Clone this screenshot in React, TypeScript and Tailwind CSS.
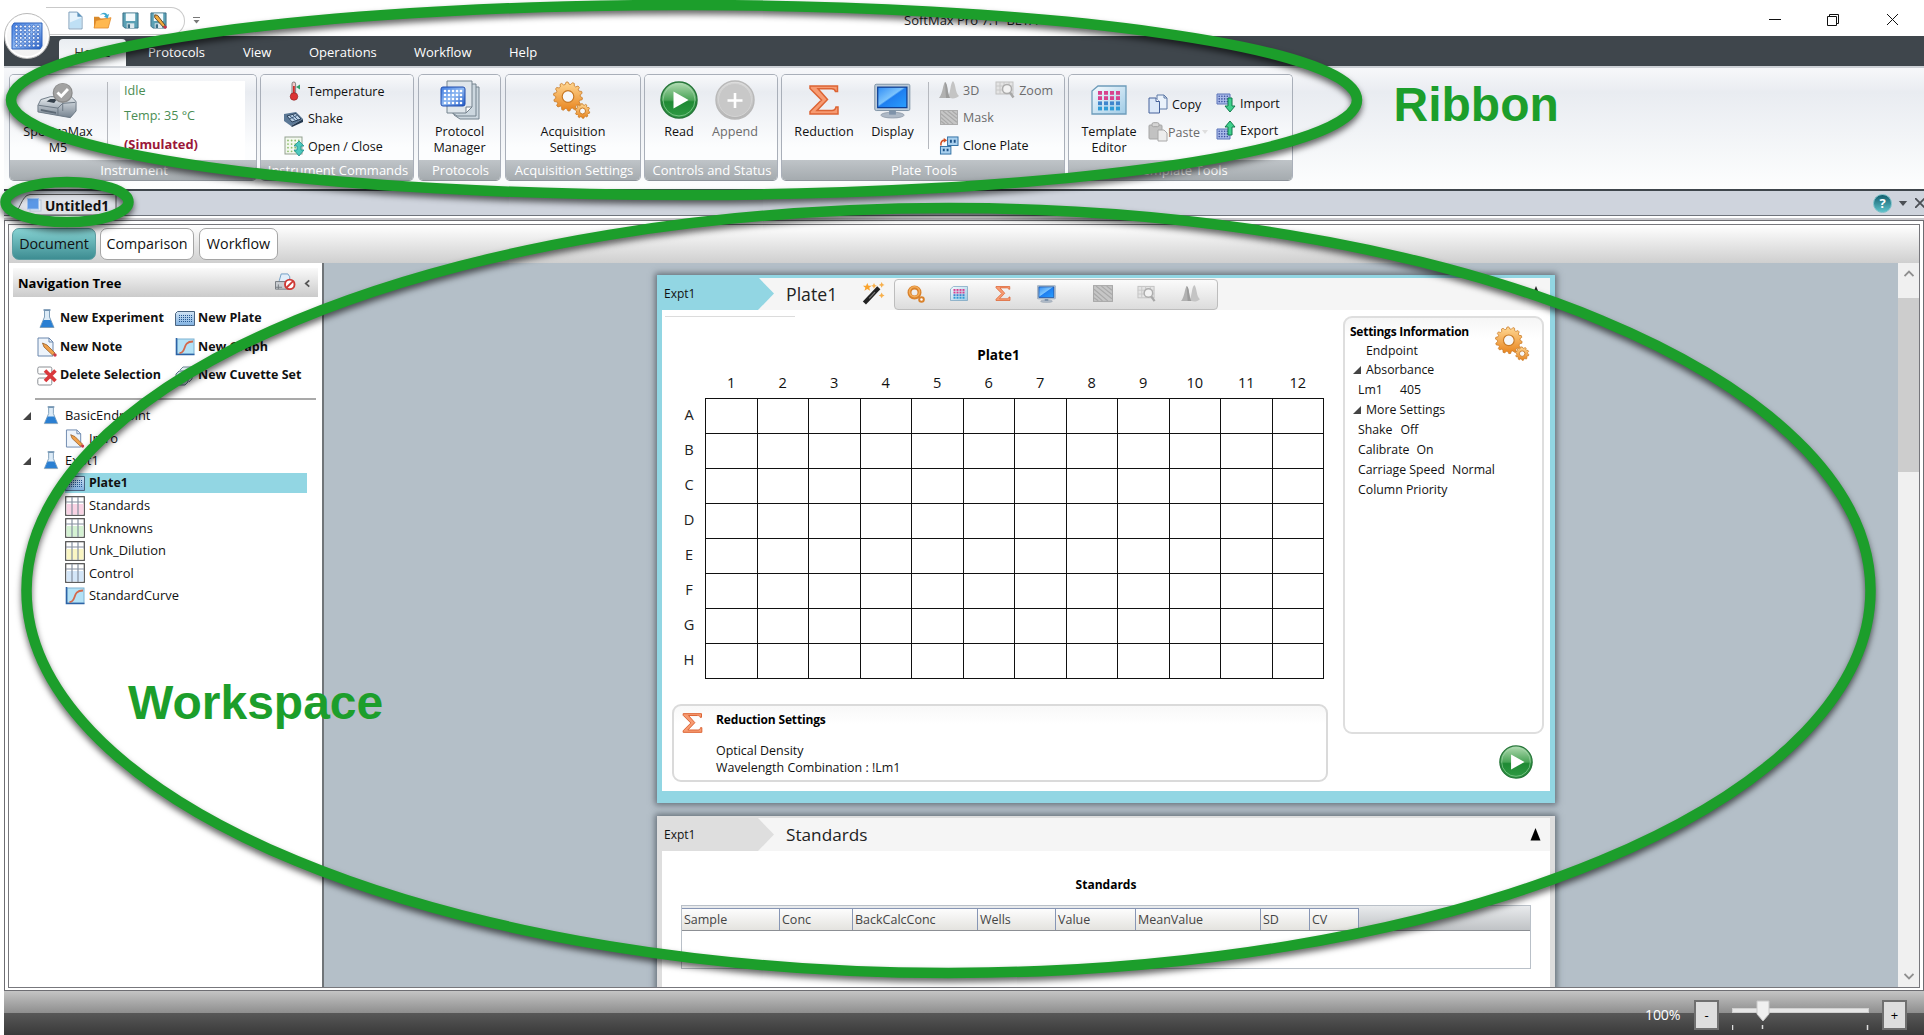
import React from "react";

type P = { className?: string };

/* ---------- icons ---------- */

const Defs = () => (
  <svg className="absolute w-0 h-0" aria-hidden="true">
    <defs>
      <linearGradient id="gPlate" x1="0" y1="0" x2="1" y2="1">
        <stop offset="0" stopColor="#3f7be0" />
        <stop offset="0.5" stopColor="#8fb9f2" />
        <stop offset="1" stopColor="#1c56c4" />
      </linearGradient>
      <linearGradient id="gTray" x1="0" y1="0" x2="0" y2="1">
        <stop offset="0" stopColor="#d3e5f5" />
        <stop offset="1" stopColor="#7fb0e0" />
      </linearGradient>
      <linearGradient id="gOrange" x1="0" y1="0" x2="0" y2="1">
        <stop offset="0" stopColor="#ffd894" />
        <stop offset="1" stopColor="#e8831c" />
      </linearGradient>
      <linearGradient id="gGreen" x1="0" y1="0" x2="0" y2="1">
        <stop offset="0" stopColor="#b4dcb4" />
        <stop offset="0.5" stopColor="#4aa457" />
        <stop offset="0.55" stopColor="#1f8a34" />
        <stop offset="1" stopColor="#2f9b44" />
      </linearGradient>
      <linearGradient id="gGray" x1="0" y1="0" x2="0" y2="1">
        <stop offset="0" stopColor="#dedede" />
        <stop offset="1" stopColor="#b4b4b4" />
      </linearGradient>
      <linearGradient id="gScreen" x1="0" y1="0" x2="1" y2="1">
        <stop offset="0" stopColor="#2f8cf5" />
        <stop offset="0.45" stopColor="#7cc4fd" />
        <stop offset="0.5" stopColor="#1f7ff0" />
        <stop offset="1" stopColor="#2aa0ff" />
      </linearGradient>
      <linearGradient id="gMetal" x1="0" y1="0" x2="0" y2="1">
        <stop offset="0" stopColor="#e6ebef" />
        <stop offset="1" stopColor="#75828f" />
      </linearGradient>
      <linearGradient id="gTpl" x1="0" y1="0" x2="1" y2="1">
        <stop offset="0" stopColor="#f6fbfe" />
        <stop offset="1" stopColor="#9fcbe6" />
      </linearGradient>
    </defs>
  </svg>
);

const Dots = ({ x, y, cols, rows, step, r, fill }: { x: number; y: number; cols: number; rows: number; step: number; r: number; fill: string }) => (
  <g fill={fill}>
    {Array.from({ length: cols * rows }, (_, i) => (
      <circle key={i} cx={x + (i % cols) * step} cy={y + Math.floor(i / cols) * step} r={r} />
    ))}
  </g>
);

const AppLogo = ({ className }: P) => (
  <svg viewBox="0 0 32 28" className={className}>
    <path d="M3 1H31V24L29 27H1V4Z" fill="url(#gPlate)" stroke="#2f62bd" />
    <g fill="#f2f7fe" stroke="#2a5cb8" strokeWidth="0.7">
      {Array.from({ length: 36 }, (_, i) => (
        <circle key={i} cx={5.5 + (i % 6) * 4.3} cy={4.5 + Math.floor(i / 6) * 3.8} r="1.500" />
      ))}
    </g>
  </svg>
);

const FileIcon = ({ className }: P) => (
  <svg viewBox="0 0 16 20" className={className}>
    <path d="M1 1H10L15 6V19H1Z" fill="#e6f3fc" stroke="#7a9bb8" />
    <path d="M2 12L14 7V18H2Z" fill="#bfe0f5" />
    <path d="M10 1V6H15Z" fill="#5c93bd" />
  </svg>
);
const FolderIcon = ({ className }: P) => (
  <svg viewBox="0 0 20 18" className={className}>
    <path d="M1 5H6L8 7H16V17H1Z" fill="#d98a2b" />
    <path d="M3 9L19 6L16 17H1Z" fill="#ffb84f" stroke="#e0892a" strokeWidth="0.8" />
    <path d="M7 4C9 0 14 0 15 3L17 2L15.500 7L11.500 5L13 4C12 2 9 2 7 4Z" fill="#3fa9cf" />
  </svg>
);
const SaveIcon = ({ className, pencil }: P & { pencil?: boolean }) => (
  <svg viewBox="0 0 18 18" className={className}>
    <path d="M1 1H17V17H3L1 15Z" fill="#5aa0b4" stroke="#3a6f86" />
    <rect x="4" y="1.500" width="10" height="8" fill="#f4fafc" />
    <rect x="5" y="12" width="8" height="5" fill="#dde9ee" />
    <rect x="6" y="13" width="2.500" height="4" fill="#3a6f86" />
    {pencil && (
      <g>
        <path d="M5 3L8 3.500L16 14L14 16L5 6Z" fill="#f2a93c" stroke="#5d4526" strokeWidth="1" />
        <circle cx="16" cy="16" r="1.800" fill="#c6304a" />
      </g>
    )}
  </svg>
);
const SpectraIcon = ({ className }: P) => (
  <svg viewBox="0 0 42 38" className={className}>
    <path d="M1 24L4 18L14 15H36L41 20V30L35 37L1 31Z" fill="url(#gMetal)" stroke="#6b7884" />
    <path d="M1.500 24L22 27L27 22L40 21M22 27V34M27 22V30" stroke="#6a7682" fill="none" />
    <path d="M4 28L20 31V33L4 30Z" fill="#5c6874" />
    <path d="M10 20L14 17.500H21L18 21.500Z" fill="#35404b" />
    <circle cx="27" cy="11" r="10.500" fill="#8b8b8b" />
    <circle cx="27" cy="10.500" r="9.300" fill="#a2a2a2" />
    <path d="M21.500 10.500L25.500 14.500L32.500 7" stroke="#fff" strokeWidth="3" fill="none" />
  </svg>
);
const ThermoIcon = ({ className }: P) => (
  <svg viewBox="0 0 20 20" className={className}>
    <rect x="8" y="1" width="3.600" height="13" rx="1.800" fill="#f2c9c9" stroke="#555" strokeWidth="0.7" />
    <rect x="9" y="5" width="1.800" height="10" fill="#d22a2a" />
    <circle cx="10" cy="15.500" r="3.800" fill="#dc3434" stroke="#8c2020" strokeWidth="0.6" />
    <path d="M12 6L16 3.500V8.500Z" fill="#2f9e6a" />
  </svg>
);
const ShakeIcon = ({ className }: P) => (
  <svg viewBox="0 0 20 16" className={className}>
    <path d="M0 3L12 1L19 8L7 15L0 10Z" fill="#5b7896" />
    <path d="M3 5L12 2.500L17 8L8 11Z" fill="#b9cfe4" stroke="#2b415a" />
    <path d="M7 15L19 8V11L8 16Z" fill="#23384f" />
    <path d="M6 5L12 10M9 4L14 9M5 8L13 4.500" stroke="#3e5b7c" />
  </svg>
);
const DoorIcon = ({ className }: P) => (
  <svg viewBox="0 0 20 20" className={className}>
    <rect x="1" y="1" width="17" height="17" fill="#f3f8ef" stroke="#93a18f" />
    <Dots x={4} y={4.5} cols={4} rows={4} step={3.6} r={0.9} fill="#8fbf6c" />
    <path d="M15 5L20 10H17V14H20L15 20L10 14H13V10H10Z" fill="#4cc8bd" stroke="#1f8f8a" strokeWidth="0.8" />
  </svg>
);
const ProtocolIcon = ({ className }: P) => (
  <svg viewBox="0 0 40 40" className={className}>
    <g stroke="#75838e" fill="#ccd7df">
      <path d="M14 7H39V39H20L14 35Z" />
      <path d="M11 4H36V36H17L11 32Z" />
      <path d="M7 1H32V27L26 33H7Z" fill="#dfe6eb" />
      <path d="M26 33V27H32Z" fill="#fff" />
    </g>
    <rect x="1" y="7" width="24" height="19" rx="2" fill="url(#gPlate)" stroke="#234fae" />
    <Dots x={5} y={11} cols={5} rows={4} step={4} r={1.3} fill="#fff" />
  </svg>
);

const gearPath = (cx: number, cy: number, ro: number, ri: number, n: number) => {
  let d = "";
  for (let i = 0; i < n; i++) {
    const a = (i / n) * Math.PI * 2;
    const s = (Math.PI * 2) / n;
    const pts: [number, number][] = [
      [ri, a],
      [ro, a + s * 0.2],
      [ro, a + s * 0.5],
      [ri, a + s * 0.7],
    ];
    pts.forEach(([r, t], k) => {
      d += (i === 0 && k === 0 ? "M" : "L") + (cx + r * Math.cos(t)).toFixed(2) + " " + (cy + r * Math.sin(t)).toFixed(2);
    });
  }
  return d + "Z";
};
const Gears = ({ className }: P) => (
  <svg viewBox="0 0 38 38" className={className}>
    <path d={gearPath(15, 15.5, 14.5, 12.3, 14)} fill="url(#gOrange)" stroke="#c87a26" strokeWidth="0.8" />
    <circle cx="15" cy="15.500" r="5.800" fill="#f6f7f9" stroke="#c87a26" strokeWidth="1.200" />
    <path d={gearPath(29.5, 30, 7.3, 6, 10)} fill="url(#gOrange)" stroke="#c87a26" strokeWidth="0.8" />
    <circle cx="29.500" cy="30" r="3" fill="#f6f7f9" stroke="#c87a26" />
  </svg>
);
const SmallGears = ({ className }: P) => (
  <svg viewBox="0 0 18 18" className={className}>
    <circle cx="7.500" cy="7.500" r="5" fill="none" stroke="#d9822c" strokeWidth="4" />
    <circle cx="7.500" cy="6.800" r="5" fill="none" stroke="#f4ad58" strokeWidth="1.500" />
    <circle cx="14.500" cy="14.500" r="2.300" fill="#fff" stroke="#d9822c" strokeWidth="2" />
  </svg>
);
const PlayIcon = ({ className }: P) => (
  <svg viewBox="0 0 38 38" className={className}>
    <circle cx="19" cy="19" r="18" fill="url(#gGreen)" stroke="#27773a" strokeWidth="1.500" />
    <circle cx="19" cy="19" r="16" fill="none" stroke="#a9dab0" strokeOpacity="0.6" />
    <path d="M13.500 10.500L28.500 19L13.500 27.500Z" fill="#fff" />
  </svg>
);
const AppendIcon = ({ className }: P) => (
  <svg viewBox="0 0 40 40" className={className}>
    <circle cx="20" cy="20" r="19" fill="url(#gGray)" stroke="#b9b9b9" strokeWidth="1.500" />
    <circle cx="20" cy="20" r="16.500" fill="#c8c8c8" stroke="#d4d4d4" />
    <path d="M20 13V28M12.500 20.500H27.500" stroke="#fff" strokeWidth="2.600" />
  </svg>
);
const SigmaIcon = ({ className }: P) => (
  <svg viewBox="0 0 30 30" className={className}>
    <path
      d="M1 1H28.500V6.500H26.500C26 4.500 25 3.800 22.500 3.800H9L18.500 14.500L8 25.500H23C25.500 25.500 26.500 24.500 27 22H29V29H1V26.500L12.500 15L1 3.500Z"
      fill="#f79b72"
      stroke="#dc6434"
      strokeWidth="1.500"
    />
  </svg>
);
const MonitorIcon = ({ className }: P) => (
  <svg viewBox="0 0 38 36" className={className}>
    <ellipse cx="19" cy="32.500" rx="12" ry="3" fill="#aeb9c6" stroke="#8794a2" strokeWidth="0.7" />
    <rect x="15.500" y="26" width="7" height="6" fill="#7f93aa" />
    <rect x="0.800" y="0.800" width="36" height="27" rx="1.500" fill="#bccbd8" stroke="#7e93a6" />
    <rect x="3.800" y="3.800" width="30" height="21" fill="url(#gScreen)" stroke="#0e3f94" strokeWidth="1.300" />
  </svg>
);
const ThreeDIcon = ({ className }: P) => (
  <svg viewBox="0 0 20 18" className={className}>
    <path d="M0 17C4 12 4 3 6 1C9 3 8 12 11 17Z" fill="#b1b1b1" />
    <path d="M9 16C12 10 11 3 14 0C17 3 16 12 20 15C17 18 12 18 9 16Z" fill="#c4c4c4" />
    <path d="M6 1C9 3 8 12 11 17H7Z" fill="#9b9b9b" />
  </svg>
);
const ZoomIcon = ({ className }: P) => (
  <svg viewBox="0 0 20 18" className={className}>
    <rect x="1" y="1" width="17" height="12" fill="#e4e4e4" stroke="#c2c2c2" />
    <path d="M1 5H18M1 9H18M5 1V13M9 1V13M14 1V13" stroke="#c8c8c8" />
    <circle cx="12" cy="8" r="4.500" fill="#f2f2f2" stroke="#adadad" strokeWidth="1.500" />
    <path d="M15 11.500L18.500 16.500" stroke="#a8a8a8" strokeWidth="2.400" />
  </svg>
);
const MaskIcon = ({ className }: P) => (
  <svg viewBox="0 0 19 16" className={className}>
    <rect x="0.500" y="0.500" width="18" height="15" fill="#c6c6c6" stroke="#a9a9a9" />
    <path d="M1 4L14 15M1 8L9 15M1 12L5 15M3 1L18 13M8 1L18 9M13 1L18 5" stroke="#a9a9a9" strokeWidth="1.200" />
  </svg>
);
const CloneIcon = ({ className }: P) => (
  <svg viewBox="0 0 20 20" className={className}>
    <g fill="#a9d0ee" stroke="#2e6ea3">
      <rect x="8.500" y="1" width="11" height="9" />
      <rect x="1" y="11" width="11" height="8" />
    </g>
    <path d="M11 4H13V7H11ZM15 4H17V7H15ZM3.500 13.500H5.500V16H3.500ZM7.500 13.500H9.500V16H7.500Z" fill="#1c5288" />
    <path d="M1.500 10C1 6 3 4.500 5 4.500" stroke="#d04d22" strokeWidth="1.600" fill="none" />
    <path d="M4.500 2L8 4.500L4.500 7Z" fill="#d04d22" />
  </svg>
);
const TemplateIcon = ({ className }: P) => (
  <svg viewBox="0 0 36 30" className={className}>
    <path d="M7 1H35V29H1V6Z" fill="url(#gTpl)" stroke="#6d9cba" strokeWidth="1.300" />
    {[0, 1, 2, 3].map((r) =>
      [0, 1, 2, 3].map((c) => (
        <rect key={r * 4 + c} x={7 + c * 6} y={6 + r * 5.2} width="4" height="3.800" fill={["#d8418f", "#d8418f", "#3f86cc", "#2f9bd6"][r]} />
      ))
    )}
  </svg>
);
const CopyIcon = ({ className }: P) => (
  <svg viewBox="0 0 20 20" className={className}>
    <path d="M9 1H16L19 4V15H9Z" fill="#eaf2fb" stroke="#5d78a6" />
    <path d="M1 4H8L11.500 7.500V19H1Z" fill="#dbe8f8" stroke="#44619a" />
    <path d="M8 4V7.500H11.500" fill="#fff" stroke="#44619a" />
    <path d="M16 1V4H19" fill="none" stroke="#5d78a6" />
  </svg>
);
const PasteIcon = ({ className }: P) => (
  <svg viewBox="0 0 20 20" className={className}>
    <rect x="1" y="3" width="13" height="14" rx="1" fill="#c2c2c2" stroke="#a6a6a6" />
    <rect x="4" y="0.700" width="7" height="4" rx="1.500" fill="#d5d5d5" stroke="#a3a3a3" />
    <path d="M10 8H16L19 11V19H10Z" fill="#ededed" stroke="#a8a8a8" />
  </svg>
);
const ImportIcon = ({ className, up }: P & { up?: boolean }) => (
  <svg viewBox="0 0 20 20" className={className}>
    <g transform={up ? "translate(0 8)" : undefined}>
      <path d="M1 1H14V11H1Z" fill="#a9bbe9" stroke="#5a72b8" />
      <Dots x={3.2} y={3.2} cols={4} rows={3} step={2.7} r={0.8} fill="#3c4f9e" />
    </g>
    {up ? (
      <path d="M14 1L19 7H16V15H12V7H9Z" fill="#3fd08c" stroke="#137a4c" />
    ) : (
      <path d="M14 19L9 13H12V5H16V13H19Z" fill="#3fd08c" stroke="#137a4c" />
    )}
  </svg>
);
const PrinterIcon = ({ className }: P) => (
  <svg viewBox="0 0 22 20" className={className}>
    <path d="M5 8L7 1H14L16 4V9H5Z" fill="#e2eefa" stroke="#6f9cc4" />
    <path d="M1 9H17V17H1Z" fill="#c9cdd1" stroke="#757a80" />
    <path d="M4 12V17M1 15H8" stroke="#757a80" />
    <circle cx="16" cy="12" r="5" fill="#fff" stroke="#cf3a36" strokeWidth="2" />
    <path d="M12.500 15.500L19.500 8.500" stroke="#cf3a36" strokeWidth="2" />
  </svg>
);
const Flask = ({ className }: P) => (
  <svg viewBox="0 0 16 20" className={className}>
    <path d="M5.500 1.500H10.500V8L15 18.500H1L5.500 8Z" fill="#dcebf7" stroke="#7f9fba" />
    <path d="M4.500 11H11.500L14.500 18H1.500Z" fill="#2a7fd2" />
    <path d="M4.500 1H11.500" stroke="#6c8fae" strokeWidth="1.600" />
  </svg>
);
const NoteIcon = ({ className }: P) => (
  <svg viewBox="0 0 20 20" className={className}>
    <path d="M1 1H12L16 5V19H1Z" fill="#eef4fb" stroke="#6b87ad" />
    <path d="M12 1V5H16" fill="none" stroke="#6b87ad" />
    <path d="M5.500 6L10 8L18 16L15.500 18L7 10Z" fill="#f0a04a" stroke="#96602b" strokeWidth="0.8" />
    <circle cx="18" cy="18" r="1.700" fill="#cf3b44" />
  </svg>
);
const DeleteIcon = ({ className }: P) => (
  <svg viewBox="0 0 20 20" className={className}>
    <rect x="0.800" y="1" width="14" height="7" rx="1.500" fill="#fff" stroke="#8b8f94" />
    <rect x="0.800" y="12" width="14" height="7" rx="1.500" fill="#fff" stroke="#8b8f94" />
    <path d="M8 4.500L18.500 15M18.500 4.500L8 15" stroke="#d9383c" strokeWidth="3.600" />
  </svg>
);
const PlateIcon = ({ className }: P) => (
  <svg viewBox="0 0 20 15" className={className}>
    <path d="M2.500 0.500H19.500V14.500H0.500V2.500Z" fill="url(#gTray)" stroke="#4a6480" />
    <g fill="#24568f">
      {Array.from({ length: 28 }, (_, i) => (
        <rect key={i} x={4 + (i % 7) * 2} y={4 + Math.floor(i / 7) * 2} width="1" height="1" />
      ))}
    </g>
  </svg>
);
const GraphIcon = ({ className }: P) => (
  <svg viewBox="0 0 20 18" className={className}>
    <rect x="2" y="1" width="17" height="15" fill="#b4e2f6" stroke="#7fb2d2" />
    <path d="M1.500 0V16.500H19.500" stroke="#2d63a6" strokeWidth="1.600" fill="none" />
    <path d="M4.500 15C12 15 6.500 3.500 18 3.500" stroke="#d4694c" strokeWidth="1.800" fill="none" />
  </svg>
);
const CuvetteIcon = ({ className }: P) => (
  <svg viewBox="0 0 20 20" className={className}>
    <path d="M5 4L8 1H17V13L14 16" fill="#e8f2f6" stroke="#6b8594" />
    <path d="M1 8L4 5H13V16L10 19H1Z" fill="#cfe3ea" stroke="#58788a" />
  </svg>
);
const TableIcon = ({ className, tint }: P & { tint: string }) => (
  <svg viewBox="0 0 20 20" className={className}>
    <rect x="0.700" y="0.700" width="18.600" height="18.600" fill="#fff" stroke="#4d4d4d" strokeWidth="1.200" />
    <rect x="1.500" y="8" width="17" height="10.500" fill={tint} />
    <path d="M1 6H19M7 1V19M13 1V19" stroke="#8590a0" strokeWidth="1.200" />
  </svg>
);
const WandIcon = ({ className }: P) => (
  <svg viewBox="0 0 24 24" className={className}>
    <path d="M2 22L17 6" stroke="#222" strokeWidth="4.500" />
    <path d="M7 17L13 10.500" stroke="#777" strokeWidth="1.200" />
    <path d="M5 1L6.300 4H9.500L7 6L8 9L5 7.300L2 9L3 6L0.500 4H3.700Z" fill="#f9a32d" />
    <path d="M12 1L13 3L15 4L13 5L12 7L11 5L9 4L11 3ZM20 0L21 2L23 3L21 4L20 6L19 4L17 3L19 2ZM20 11L21 13L23 14L21 15L20 17L19 15L17 14L19 13Z" fill="#f7b04c" />
  </svg>
);
const HelpIcon = () => (
  <span className="flex h-[19px] w-[19px] items-center justify-center rounded-full border border-[#7bc0c8] bg-linear-to-b from-[#12606f] to-[#5dc3cb] text-[13px] leading-none font-bold text-white">?</span>
);
const Tri = ({ className }: P) => (
  <svg viewBox="0 0 8 8" className={className}>
    <path d="M8 0V8H0Z" fill="#444" />
  </svg>
);

/* ---------- ribbon ---------- */

const Group = ({ w, label, children }: { w: string; label: string; children: React.ReactNode }) => (
  <section className={"flex h-[107px] shrink-0 flex-col overflow-hidden rounded-[5px] border border-[#a9afb9] border-b-[#8e949b] shadow-[inset_0_0_0_1px_rgba(255,255,255,0.8)] " + w}>
    <div className="flex h-[85px] min-h-0 bg-linear-to-b from-[#f8f9fb] from-0% via-[#e9ecf1] via-20% to-[#fcfdfe] to-85%">{children}</div>
    <div className="h-[20px] bg-linear-to-b from-[#bfc4c8] to-[#a5abaf] pl-[2px] text-center text-[13px] leading-[20px] whitespace-nowrap text-white">{label}</div>
  </section>
);

const Big = ({ icon, lines, className, muted }: { icon: React.ReactNode; lines: string[]; className: string; muted?: boolean }) => (
  <div className={"flex shrink-0 flex-col items-center " + className}>
    <div className="flex h-[49px] items-center pt-px">{icon}</div>
    {lines.map((l) => (
      <div key={l} className={"h-[16px] text-[12.600px] leading-[16px] whitespace-nowrap " + (muted ? "text-[#6b6b6b]" : "text-[#111]")}>
        {l}
      </div>
    ))}
  </div>
);

const Small = ({ icon, label, muted }: { icon: React.ReactNode; label: string; muted?: boolean }) => (
  <div className={"flex h-[20px] items-center gap-[4px] text-[12.500px] whitespace-nowrap " + (muted ? "text-[#6b6b6b]" : "text-[#111]")}>
    {icon}
    <span className="pt-px leading-[20px]">{label}</span>
  </div>
);

const Ribbon = () => (
  <div className="ml-[4px] flex h-[121px] shrink-0 items-start bg-linear-to-b from-[#f7f8fa] via-[#e9ecf1] via-20% to-[#fdfefe] pt-[6px] pl-[5px]">
    <Group w="w-[248px] mr-[3px]" label="Instrument">
      <Big className="w-[96px]" icon={<SpectraIcon className="h-[37px] w-[40px] -translate-x-px" />} lines={["SpectraMax", "M5"]} />
      <div className="mt-[7px] ml-px h-[70px] w-px bg-[#b5b8be]" />
      <div className="mt-[6px] ml-[12px] flex h-[79px] w-[125px] flex-col bg-white pt-px pl-[4px] text-[12.600px] leading-[18px]">
        <span className="text-[#4a8d53]">Idle</span>
        <span className="mt-[7px] text-[#4a8d53]">Temp: 35 °C</span>
        <span className="mt-[9.500px] text-[12.900px] font-bold text-[#9b1739]">(Simulated)</span>
      </div>
    </Group>
    <Group w="w-[154px] mr-[4px]" label="Instrument Commands">
      <div className="mt-[6px] ml-[23px] flex flex-col gap-[7.500px]">
        <Small icon={<ThermoIcon className="h-[20px] w-[20px]" />} label="Temperature" />
        <Small icon={<ShakeIcon className="h-[16px] w-[20px]" />} label="Shake" />
        <Small icon={<DoorIcon className="h-[20px] w-[20px]" />} label="Open / Close" />
      </div>
    </Group>
    <Group w="w-[83px] mr-[4px]" label="Protocols">
      <Big className="w-full" icon={<ProtocolIcon className="h-[40px] w-[40px]" />} lines={["Protocol", "Manager"]} />
    </Group>
    <Group w="w-[136px] mr-[3px]" label="Acquisition Settings">
      <Big className="w-full" icon={<Gears className="h-[38px] w-[38px] -translate-x-px" />} lines={["Acquisition", "Settings"]} />
    </Group>
    <Group w="w-[134px] mr-[3px]" label="Controls and Status">
      <Big className="ml-[5px] w-[58px]" icon={<PlayIcon className="h-[38px] w-[38px]" />} lines={["Read"]} />
      <Big className="w-[54px]" muted icon={<AppendIcon className="h-[40px] w-[40px]" />} lines={["Append"]} />
    </Group>
    <Group w="w-[284px] mr-[3px]" label="Plate Tools">
      <Big className="ml-[7px] w-[70px]" icon={<SigmaIcon className="h-[30px] w-[30px]" />} lines={["Reduction"]} />
      <Big className="w-[67px]" icon={<MonitorIcon className="mt-[2px] h-[36px] w-[37px]" />} lines={["Display"]} />
      <div className="mt-[7px] ml-[2px] h-[67px] w-px bg-[#b5b8be]" />
      <div className="mt-[5px] ml-[10px] flex flex-col gap-[7.500px]">
        <div className="flex gap-[16px]">
          <Small muted icon={<ThreeDIcon className="h-[18px] w-[20px]" />} label="3D" />
          <Small muted icon={<ZoomIcon className="h-[18px] w-[20px]" />} label="Zoom" />
        </div>
        <Small muted icon={<MaskIcon className="h-[15px] w-[20px]" />} label="Mask" />
        <Small icon={<CloneIcon className="h-[19px] w-[20px]" />} label="Clone Plate" />
      </div>
    </Group>
    <Group w="w-[225px]" label="Template Tools">
      <Big className="ml-[9px] w-[62px]" icon={<TemplateIcon className="h-[30px] w-[36px]" />} lines={["Template", "Editor"]} />
      <div className="mt-[19px] ml-[8px] flex w-[68px] flex-col gap-[8px]">
        <Small icon={<CopyIcon className="h-[20px] w-[20px]" />} label="Copy" />
        <div className="flex h-[20px] items-center text-[12.500px] text-[#6b6b6b]">
          <PasteIcon className="h-[20px] w-[20px]" />
          <span className="pt-px leading-[20px]">Paste</span>
          <svg viewBox="0 0 6 4" className="ml-[2px] h-[4px] w-[6px]"><path d="M0 0H6L3 4Z" fill="#dedede" /></svg>
        </div>
      </div>
      <div className="mt-[18px] flex flex-col gap-[7px]">
        <Small icon={<ImportIcon className="h-[20px] w-[20px]" />} label="Import" />
        <Small icon={<ImportIcon up className="h-[20px] w-[20px]" />} label="Export" />
      </div>
    </Group>
  </div>
);

/* ---------- header ---------- */

const TitleBar = () => (
  <header className="relative flex h-[36px] shrink-0 bg-white">
    <div className="mt-[7px] ml-[46px] flex h-[28px] w-[139px] items-center gap-[10px] rounded-tr-full rounded-br-full border border-l-0 border-[#c9c9c9] pb-px pl-[22px]">
      <FileIcon className="h-[19px] w-[15px]" />
      <FolderIcon className="h-[17px] w-[19px]" />
      <SaveIcon className="h-[17px] w-[17px]" />
      <SaveIcon pencil className="ml-px h-[17px] w-[17px]" />
    </div>
    <svg viewBox="0 0 7 7" className="mt-[17px] ml-[8px] h-[7px] w-[7px]">
      <path d="M0 0.500H7" stroke="#777" />
      <path d="M0.500 3H6.500L3.500 6.500Z" fill="#777" />
    </svg>
    <div className="mt-[10px] ml-[704px] h-[20px] w-[160px] text-[13px] leading-[20px] whitespace-pre text-[#222]">SoftMax Pro 7.1  BETA</div>
    <svg viewBox="0 0 132 14" className="mt-[13px] ml-[705px] h-[14px] w-[132px]" fill="none" stroke="#111" strokeWidth="1">
      <path d="M0 6.500H12" />
      <path d="M58.500 3.500H67.500V12.500H58.500ZM60.500 3V1.500H69.500V10.500H68" />
      <path d="M118 1L129 12M129 1L118 12" />
    </svg>
    <div className="absolute top-[13px] left-[4px] z-10 flex h-[46px] w-[46px] items-center justify-center rounded-full border border-[#b9b9b9] bg-linear-to-b from-white to-[#f0f0f0] shadow-[inset_0_0_0_2px_#fff]">
      <AppLogo className="h-[28px] w-[32px]" />
    </div>
  </header>
);

const MenuBar = () => (
  <nav className="ml-[4px] flex h-[30px] shrink-0 items-end bg-[#3f464c] text-[13px] leading-[27px] text-white">
    <div className="ml-[55px] h-[27px] w-[67px] rounded-t-[4px] bg-linear-to-b from-[#e9edf1] to-[#fafbfc] text-center text-[#333]">Home</div>
    <div className="flex h-[27px]">
      <span className="ml-[22px] w-[95px]">Protocols</span>
      <span className="w-[66px]">View</span>
      <span className="w-[105px]">Operations</span>
      <span className="w-[95px]">Workflow</span>
      <span>Help</span>
    </div>
  </nav>
);

const TabStrip = () => (
  <div className="ml-[4px] flex h-[24px] shrink-0 items-end bg-[#cfd4dd]">
    <div className="relative ml-[8px] h-[21px] w-[122px]">
      <svg viewBox="0 0 122 21" className="absolute inset-0 h-[21px] w-[122px]">
        <path d="M0 21C8 19 9 1 18 0.500H104V21Z" fill="#dfe2e8" stroke="#555" />
      </svg>
      <div className="relative flex h-[21px] items-center pl-[15px]">
        <svg viewBox="0 0 15 14" className="h-[14px] w-[15px]">
          <rect x="3" y="2" width="11" height="11" fill="#e6edf5" stroke="#b9c6d6" />
          <rect x="0.500" y="0.500" width="11" height="10.500" fill="#5b98e6" stroke="#9ec1ee" />
        </svg>
        <span className="ml-[3px] pt-[3px] text-[13.700px] leading-[20px] font-bold text-[#111]">Untitled1</span>
      </div>
    </div>
    <div className="ml-auto flex h-[24px] items-center">
      <HelpIcon />
      <svg viewBox="0 0 10 6" className="ml-[6px] h-[5px] w-[10px]"><path d="M0 0H10L5 6Z" fill="#4b4f55" /></svg>
      <svg viewBox="0 0 9 10" className="ml-[7px] h-[10px] w-[9px]"><path d="M0 0L10 10M10 0L0 10" stroke="#4b4f55" strokeWidth="1.800" /></svg>
    </div>
  </div>
);

/* ---------- navigation tree ---------- */

const Action = ({ icon, label, w }: { icon: React.ReactNode; label: string; w: string }) => (
  <div className={"flex h-[20px] items-center whitespace-nowrap " + w}>
    <span className="flex w-[23px] justify-start">{icon}</span>
    {label}
  </div>
);

const Branch = ({ label }: { label: string }) => (
  <div className="flex h-[22.500px] items-center pl-[14px]">
    <Tri className="h-[8px] w-[8px]" />
    <Flask className="mr-[6px] ml-[12px] h-[19px] w-[16px]" />
    {label}
  </div>
);
const Leaf = ({ icon, label, active }: { icon: React.ReactNode; label: string; active?: boolean }) => (
  <div className="flex h-[22.500px] items-center pl-[56px]">
    <div className={"flex h-[20px] w-[242px] items-center gap-[4px] " + (active ? "bg-[#92d6e3] text-[12.400px] font-bold" : "")}>
      {icon}
      {label}
    </div>
  </div>
);

const Sidebar = () => (
  <aside className="flex w-[315px] shrink-0 flex-col border-r-2 border-[#6f7478] bg-white text-[12.500px] text-[#111]">
    <div className="mt-[5px] ml-[4px] flex h-[29px] w-[305px] shrink-0 items-center bg-linear-to-b from-[#fafafa] to-[#cbcbcb] pl-[5px] text-[13px] leading-[18px] font-bold text-black">
      <span className="w-[256px]">Navigation Tree</span>
      <PrinterIcon className="h-[19px] w-[22px]" />
      <svg viewBox="0 0 8 8" className="mt-[2px] ml-[8px] h-[9px] w-[7px]"><path d="M6 0.500L2 4L6 7.500" stroke="#555" strokeWidth="2" fill="none" /></svg>
    </div>
    <div className="mt-[11.500px] ml-[28px] flex flex-col gap-[8.500px] font-bold">
      <div className="flex">
        <Action w="w-[138px]" icon={<Flask className="ml-[2px] h-[20px] w-[16px]" />} label="New Experiment" />
        <Action w="w-[140px]" icon={<PlateIcon className="h-[15px] w-[20px]" />} label="New Plate" />
      </div>
      <div className="flex">
        <Action w="w-[138px]" icon={<NoteIcon className="h-[20px] w-[20px]" />} label="New Note" />
        <Action w="w-[140px]" icon={<GraphIcon className="h-[18px] w-[20px]" />} label="New Graph" />
      </div>
      <div className="flex">
        <Action w="w-[138px]" icon={<DeleteIcon className="h-[20px] w-[20px]" />} label="Delete Selection" />
        <Action w="w-[140px]" icon={<CuvetteIcon className="h-[20px] w-[20px]" />} label="New Cuvette Set" />
      </div>
    </div>
    <div className="mt-[12px] ml-[26px] h-[2px] w-[281px] shrink-0 bg-[#a9a9a9]" />
    <div className="mt-[5px] flex flex-col text-[12.900px]">
      <Branch label="BasicEndpoint" />
      <Leaf icon={<NoteIcon className="h-[19px] w-[20px]" />} label="Intro" />
      <Branch label="Expt1" />
      <Leaf active icon={<PlateIcon className="h-[15px] w-[20px]" />} label="Plate1" />
      <Leaf icon={<TableIcon tint="#f9d3e4" className="h-[20px] w-[20px]" />} label="Standards" />
      <Leaf icon={<TableIcon tint="#d5f2d3" className="h-[20px] w-[20px]" />} label="Unknowns" />
      <Leaf icon={<TableIcon tint="#faf6c3" className="h-[20px] w-[20px]" />} label="Unk_Dilution" />
      <Leaf icon={<TableIcon tint="#d4e6f8" className="h-[20px] w-[20px]" />} label="Control" />
      <Leaf icon={<GraphIcon className="h-[18px] w-[20px]" />} label="StandardCurve" />
    </div>
  </aside>
);

/* ---------- plate section ---------- */

const Tag = ({ tone }: { tone: string }) => (
  <div className={"h-[33px] w-[112px] pl-[2px] text-[12px] leading-[33px] text-[#111] [clip-path:polygon(0_0,96px_0,100%_50%,96px_100%,0_100%)] " + tone}>Expt1</div>
);

const letters = ["A", "B", "C", "D", "E", "F", "G", "H"];

const SettingsInfo = () => (
  <div className="mt-[6px] ml-[14px] h-[418px] w-[201px] rounded-[9px] border-2 border-[#dedede] bg-linear-to-b from-[#f6f6f6] to-white to-5% pt-[3px] pl-[5px] text-[12.300px] leading-[20px] whitespace-pre text-[#111]">
    <div className="flex h-[39px] justify-between">
      <div>
        <div className="h-[20px] text-[12px] leading-[21px] font-bold tracking-[-0.260px] text-black">Settings Information</div>
        <div className="h-[19px] pl-[16px] leading-[19px]">Endpoint</div>
      </div>
      <Gears className="mt-[5px] mr-[12px] h-[35px] w-[35px]" />
    </div>
    <div className="flex items-center gap-[5px] pl-[3px]"><Tri className="h-[8px] w-[8px]" />Absorbance</div>
    <div className="flex pl-[8px]"><span className="w-[42px]">Lm1</span>405</div>
    <div className="flex items-center gap-[5px] pl-[3px]"><Tri className="h-[8px] w-[8px]" />More Settings</div>
    <div className="flex gap-[8px] pl-[8px]"><span>Shake</span><span>Off</span></div>
    <div className="flex gap-[7px] pl-[8px]"><span>Calibrate</span><span>On</span></div>
    <div className="flex gap-[7px] pl-[8px]"><span>Carriage Speed</span><span>Normal</span></div>
    <div className="pl-[8px]">Column Priority</div>
  </div>
);

const PlatePanel = () => (
  <section className="flex h-[528px] w-[898px] shrink-0 flex-col bg-[#92d6e3] px-[5px] pt-[3px] shadow-[0_0_6px_2px_rgba(60,70,80,0.65)]">
    <div className="flex h-[32px] shrink-0 bg-[#f5f5f5]">
      <Tag tone="bg-[#92d6e3] -mt-px" />
      <div className="ml-[12px] w-[76px] text-[17.700px] leading-[32px] text-[#222]">Plate1</div>
      <WandIcon className="mt-[4px] h-[23px] w-[24px]" />
      <div className="mt-px ml-[8px] flex h-[31px] w-[324px] items-center rounded-[4px] border border-[#bdbdbd] bg-linear-to-b from-[#fbfbfb] to-[#dcdcdc] pb-[2px] pl-[12px]">
        <SmallGears className="h-[18px] w-[18px]" />
        <TemplateIcon className="ml-[25px] h-[17px] w-[18px]" />
        <SigmaIcon className="ml-[27px] h-[15px] w-[16px]" />
        <MonitorIcon className="ml-[26px] h-[18px] w-[19px]" />
        <MaskIcon className="ml-[37px] h-[17px] w-[20px]" />
        <ZoomIcon className="ml-[24px] h-[18px] w-[19px]" />
        <ThreeDIcon className="ml-[25px] h-[17px] w-[19px]" />
      </div>
      <svg viewBox="0 0 10 14" className="mt-[7px] ml-[313px] h-[14px] w-[10px]"><path d="M5 1L10 13H0Z" fill="#222" /></svg>
    </div>
    <div className="flex h-[481px] bg-white">
      <div className="w-[667px] shrink-0">
        <div className="mt-[6px] ml-[3px] h-px w-[130px] bg-[#dcdcdc]" />
        <div className="mt-[28px] ml-[43px] h-[20px] w-[618px] pr-[31px] text-center text-[13.600px] leading-[20px] font-bold text-black">Plate1</div>
        <div className="mt-[7px] ml-[43px] flex h-[26px] w-[619px] text-[14.600px] leading-[20px] text-[#111]">
          {Array.from({ length: 12 }, (_, i) => (
            <span key={i} className="w-[51.500px] pl-px text-center">{i + 1}</span>
          ))}
        </div>
        <div className="flex">
          <div className="flex w-[43px] flex-col pl-[11px] text-center text-[14.600px] text-[#222]">
            {letters.map((l) => (
              <span key={l} className="h-[35px] w-[32px] leading-[33px]">{l}</span>
            ))}
          </div>
          <div className="grid h-[281px] w-[619px] grid-cols-12 grid-rows-8 border-t border-l border-[#111]">
            {Array.from({ length: 96 }, (_, i) => (
              <div key={i} className="border-r border-b border-[#111]" />
            ))}
          </div>
        </div>
        <div className="mt-[25px] ml-[10px] flex h-[78px] w-[656px] rounded-[9px] border-2 border-[#dadada] bg-linear-to-b from-[#f8f8f8] to-white to-25% pt-[6px] pl-[8px] text-[12.450px] text-[#111]">
          <SigmaIcon className="mt-px h-[20px] w-[21px]" />
          <div className="ml-[13px]">
            <div className="h-[30px] text-[12px] leading-[15px] font-bold tracking-[-0.150px] text-black">Reduction Settings</div>
            <div className="leading-[17px]">Optical Density</div>
            <div className="leading-[17px]">Wavelength Combination : !Lm1</div>
          </div>
        </div>
      </div>
      <div className="flex w-[221px] flex-col">
        <SettingsInfo />
        <PlayIcon className="mt-[11px] ml-[170px] h-[34px] w-[34px]" />
      </div>
    </div>
  </section>
);

/* ---------- standards section ---------- */

const StandardsPanel = () => (
  <section className="mt-[13px] flex h-[190px] w-[898px] shrink-0 flex-col bg-[#dedede] px-[5px] pt-[2px] shadow-[0_0_6px_2px_rgba(60,70,80,0.65)]">
    <div className="flex h-[33px] shrink-0 bg-[#f5f5f5]">
      <Tag tone="bg-[#dedede]" />
      <div className="ml-[12px] text-[17.200px] leading-[33px] text-[#222]">Standards</div>
      <svg viewBox="0 0 11 14" className="mt-[9px] mr-[9px] ml-auto h-[14px] w-[11px]"><path d="M5.500 1L10.500 13.500H0.500Z" fill="#000" /></svg>
    </div>
    <div className="h-[160px] bg-white">
      <div className="pt-[24px] text-center text-[12px] leading-[20px] font-bold text-black">Standards</div>
      <div className="mt-[10px] ml-[19px] h-[64px] w-[850px] border border-[#b9c0c8]">
        <div className="flex h-[25px] border-b border-[#8c8f94] bg-linear-to-b from-[#e9ebed] to-[#c0c3c6] pt-[2px] text-[12.500px] leading-[21px] text-[#444]">
          {(
            [
              ["Sample", "w-[98px]"],
              ["Conc", "w-[73px]"],
              ["BackCalcConc", "w-[125px]"],
              ["Wells", "w-[78px]"],
              ["Value", "w-[80px]"],
              ["MeanValue", "w-[125px]"],
              ["SD", "w-[49px]"],
              ["CV", "w-[49px]"],
            ] as const
          ).map(([t, w]) => (
            <div key={t} className={"border-t border-r border-[#8796b5] bg-linear-to-b from-[#fdfdfd] to-[#e4e3df] pl-[2px] " + w}>{t}</div>
          ))}
        </div>
      </div>
    </div>
  </section>
);

/* ---------- footer ---------- */

const StatusBar = () => (
  <footer className="ml-[4px] flex h-[44px] shrink-0 bg-[linear-gradient(to_bottom,#c4c4c4_0,#8e8e8e_22px,#585858_22px,#393939_44px)]">
    <div className="mt-[14px] ml-[1641px] w-[49px] text-[14.200px] leading-[20px] tracking-[-0.200px] text-white">100%</div>
    <button className="mt-[9px] h-[30px] w-[25px] border-2 border-[#707070] bg-[#dedede] text-[13px] leading-[26px] text-black">-</button>
    <div className="relative mt-[9px] ml-[13px] h-[32px] w-[138px]">
      <div className="absolute top-[8px] left-0 h-[5px] w-[137px] border border-[#d0d0d0] bg-[#e6e6e6]" />
      <svg viewBox="0 0 138 32" className="absolute inset-0 h-[32px] w-[138px]">
        <path d="M25 1H37V14L31 21L25 14Z" fill="#f0f0f0" stroke="#c8c8c8" />
        <path d="M0.500 25V30M30.500 25V29M135.500 25V30" stroke="#ddd" strokeWidth="1.500" />
      </svg>
    </div>
    <button className="mt-[9px] ml-[12px] h-[30px] w-[25px] border-2 border-[#707070] bg-[#dedede] text-[13px] leading-[26px] text-black">+</button>
  </footer>
);

const Pill = ({ label, className }: { label: string; className: string }) => (
  <div className={"flex h-[32px] items-center justify-center rounded-[7px] border text-[14.300px] text-[#111] " + className}>{label}</div>
);

/* ---------- callouts ---------- */

const Callouts = () => (
  <div className="pointer-events-none absolute inset-0 z-20">
    <svg viewBox="0 0 1924 1035" className="absolute inset-0 h-[1035px] w-[1924px] [filter:drop-shadow(0_4px_3px_rgba(0,0,0,0.6))]" fill="none" stroke="#1c9e2b" strokeWidth="10.500">
      <ellipse cx="684" cy="100" rx="673" ry="95" />
      <ellipse cx="67" cy="202" rx="61.500" ry="20" />
      <ellipse cx="948.500" cy="590.500" rx="922" ry="382.500" />
    </svg>
    <div className="absolute top-[78px] left-[1393.500px] font-['Liberation_Sans',sans-serif] text-[48px] leading-[54px] font-bold text-[#1c9e2b]">Ribbon</div>
    <div className="absolute top-[676px] left-[128px] font-['Liberation_Sans',sans-serif] text-[48px] leading-[54px] font-bold text-[#1c9e2b]">Workspace</div>
  </div>
);

export default function App() {
  return (
    <div className="relative flex h-[1035px] w-[1924px] flex-col overflow-hidden bg-white font-['Open_Sans','Noto_Sans',sans-serif] whitespace-nowrap">
      <Defs />
      <TitleBar />
      <MenuBar />
      <div className="ml-[4px] h-[2px] shrink-0 bg-[#cdd1d6]" />
      <Ribbon />
      <div className="ml-[4px] h-[2px] shrink-0 bg-[#3f464c]" />
      <TabStrip />
      <div className="ml-[4px] h-[5px] shrink-0 border-t border-[#6f747c] bg-[linear-gradient(to_bottom,#fff_2px,#c9c9cd_2px)]" />
      <main className="ml-[4px] flex h-[771px] shrink-0 flex-col border border-[#6d6d72] p-[3px] pb-[2px]">
        <div className="flex h-[764px] flex-col border border-[#77777c]">
          <div className="flex h-[38px] shrink-0 items-center bg-linear-to-b from-white to-[#cfcfcf] pl-[3px]">
            <Pill label="Document" className="w-[84px] border-[#5c9ea2] bg-linear-to-b from-[#86d3d3] to-[#3d8d92]" />
            <Pill label="Comparison" className="ml-[4px] w-[94px] border-[#a5a5a5] bg-white" />
            <Pill label="Workflow" className="ml-[5px] w-[79px] border-[#a5a5a5] bg-white" />
          </div>
          <div className="flex min-h-0 flex-1">
            <Sidebar />
            <div className="flex min-w-0 flex-1 flex-col items-start overflow-hidden bg-[#b4bfc8] pt-[12px] pl-[333px]">
              <PlatePanel />
              <StandardsPanel />
            </div>
            <div className="flex w-[21px] shrink-0 flex-col items-center bg-[#f0f0f0]">
              <svg viewBox="0 0 10 7" className="mt-[7px] h-[7px] w-[10px]"><path d="M0.500 6L5 1.500L9.500 6" stroke="#8f8f8f" strokeWidth="1.800" fill="none" /></svg>
              <div className="mt-[21px] h-[174px] w-full bg-[#cdcdcd]" />
              <svg viewBox="0 0 10 7" className="mt-auto mb-[7px] h-[7px] w-[10px]"><path d="M0.500 1L5 5.500L9.500 1" stroke="#8f8f8f" strokeWidth="1.800" fill="none" /></svg>
            </div>
          </div>
        </div>
      </main>
      <StatusBar />
      <Callouts />
    </div>
  );
}
